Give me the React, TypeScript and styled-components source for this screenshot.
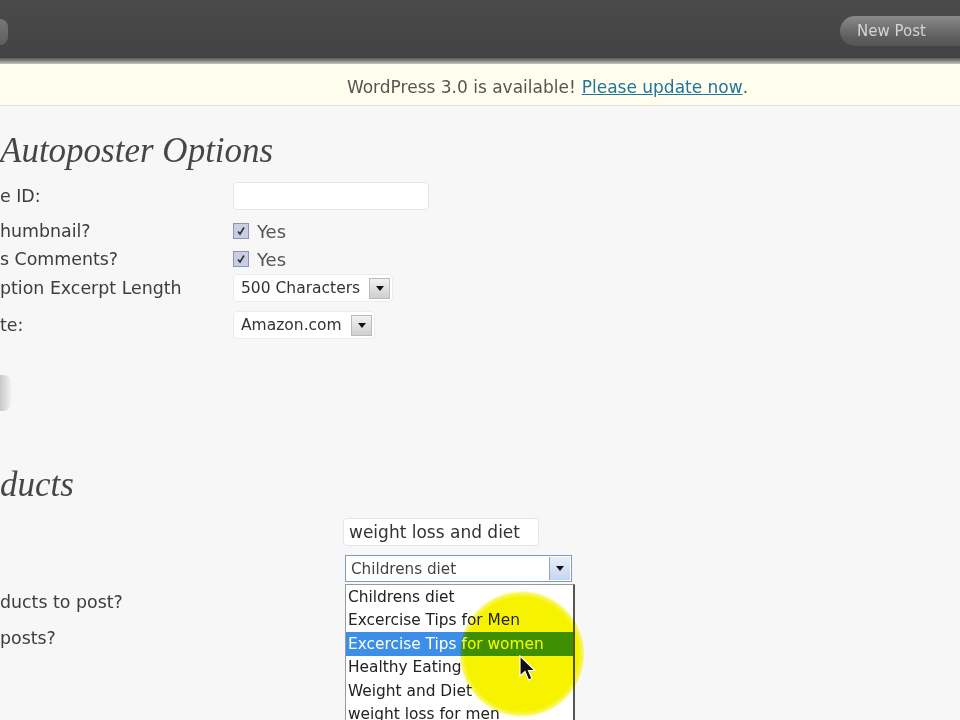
import React from "react";
import styled, { createGlobalStyle } from "styled-components";

const GlobalStyle = createGlobalStyle`
  html, body {
    margin: 0;
    padding: 0;
    width: 960px;
    height: 720px;
    overflow: hidden;
    background: #f7f7f7;
    font-family: "DejaVu Sans", Verdana, sans-serif;
  }
`;

const Page = styled.div`
  width: 960px;
  height: 720px;
  overflow: hidden;
  position: relative;
  display: flex;
  flex-direction: column;
`;

const Header = styled.div`
  height: 58px;
  background: linear-gradient(#4a4a4a, #434343);
  display: flex;
  align-items: center;
  justify-content: space-between;
  flex-shrink: 0;
`;

const HeaderEdge = styled.div`
  height: 6px;
  background: linear-gradient(#5a5a5a, #8a8a88 50%, #c8c8c0);
  flex-shrink: 0;
`;

const EdgeButton = styled.div`
  width: 8px;
  height: 26px;
  margin-top: 6px;
  border-radius: 0 8px 8px 0;
  background: linear-gradient(#777, #5e5e5e);
`;

const NewPost = styled.div`
  width: 122px;
  height: 30px;
  margin-top: 4px;
  margin-right: -2px;
  border-radius: 15px 0 0 15px;
  background: linear-gradient(#8a8a8a, #5f5f5f 70%, #555);
  color: #d4d4d4;
  font-size: 15px;
  display: flex;
  align-items: center;
  padding-left: 17px;
  box-sizing: border-box;
`;

const Notice = styled.div`
  height: 42px;
  background: #fffeee;
  border-bottom: 1px solid #e2e2d8;
  display: flex;
  align-items: center;
  justify-content: center;
  padding: 4px 0 0 135px;
  box-sizing: border-box;
  font-size: 17px;
  color: #555;
  flex-shrink: 0;
`;

const Link = styled.a`
  color: #21759b;
  text-decoration: underline;
  margin-left: 6px;
`;

const Content = styled.div`
  display: flex;
  flex-direction: column;
`;

const Heading = styled.h2<{ $top: number }>`
  margin: ${(p) => p.$top}px 0 0 0;
  height: 44px;
  line-height: 44px;
  font-family: "Liberation Serif", Georgia, serif;
  font-style: italic;
  font-weight: normal;
  font-size: 35px;
  color: #464646;
`;

const FormGrid = styled.div<{ $label: number; $top: number }>`
  display: grid;
  grid-template-columns: ${(p) => p.$label}px 1fr;
  margin-top: ${(p) => p.$top}px;
`;

const Label = styled.div<{ $h: number }>`
  height: ${(p) => p.$h}px;
  display: flex;
  align-items: center;
  font-size: 17.4px;
  color: #3d3d3d;
  white-space: nowrap;
`;

const Field = styled.div<{ $h: number }>`
  height: ${(p) => p.$h}px;
  display: flex;
  align-items: center;
  gap: 8px;
  position: relative;
  font-size: 18px;
  color: #555;
`;

const TextBox = styled.div<{ $w: number }>`
  width: ${(p) => p.$w}px;
  height: 28px;
  box-sizing: border-box;
  background: #fff;
  border: 1px solid #e6e6e6;
  border-radius: 4px;
  display: flex;
  align-items: center;
  padding-left: 5px;
  font-size: 17px;
  color: #333;
  white-space: nowrap;
`;

const Check = styled.div`
  width: 16px;
  height: 16px;
  box-sizing: border-box;
  background: #c9cee2;
  border: 1px solid #8d95b3;
  display: flex;
  align-items: center;
  justify-content: center;
`;

const SelectBox = styled.div<{ $w: number }>`
  width: ${(p) => p.$w}px;
  height: 28px;
  box-sizing: border-box;
  background: #fff;
  border: 1px solid #ececec;
  border-radius: 4px;
  display: flex;
  align-items: center;
  justify-content: space-between;
  padding: 0 2px 0 7px;
  font-size: 15.5px;
  color: #333;
  white-space: nowrap;
`;

const ArrowButton = styled.div`
  width: 21px;
  height: 21px;
  box-sizing: border-box;
  border: 1px solid #bbb;
  background: linear-gradient(#f2f2f2, #cfcfcf);
  display: flex;
  align-items: center;
  justify-content: center;
`;

const FocusSelect = styled.div`
  width: 227px;
  height: 27px;
  box-sizing: border-box;
  margin-left: 2px;
  background: #fff;
  border: 1px solid #7f9db9;
  display: flex;
  align-items: center;
  justify-content: space-between;
  padding: 0 1px 0 5px;
  font-size: 15.2px;
  color: #444;
  white-space: nowrap;
`;

const BlueArrow = styled.div`
  width: 21px;
  height: 23px;
  box-sizing: border-box;
  border-left: 1px solid #8ea6c8;
  background: linear-gradient(#e6eefc, #c4d5f2);
  display: flex;
  align-items: center;
  justify-content: center;
`;

const DropList = styled.div`
  position: absolute;
  top: 31px;
  left: 2px;
  width: 230px;
  background: #fff;
  border: 1px solid #9a9a9a;
  border-right: 2px solid #555;
  box-sizing: border-box;
  z-index: 2;
`;

const Option = styled.div<{ $active?: boolean }>`
  height: 23.5px;
  display: flex;
  align-items: center;
  padding-left: 2px;
  font-size: 15.4px;
  color: ${(p) => (p.$active ? "#fff" : "#222")};
  background: ${(p) => (p.$active ? "#3d8ee8" : "transparent")};
  white-space: nowrap;
`;

const SaveStub = styled.div`
  width: 11px;
  height: 36px;
  margin-top: 30px;
  border-radius: 0 8px 8px 0;
  background: linear-gradient(90deg, #a8a8a8, #ececec);
  opacity: 0.6;
`;

const Highlight = styled.div`
  position: absolute;
  left: 460px;
  top: 591px;
  width: 124px;
  height: 126px;
  border-radius: 50%;
  background: radial-gradient(
    circle,
    #f6f200 64%,
    rgba(246, 242, 0, 0.6) 69%,
    rgba(246, 242, 0, 0) 72%
  );
  mix-blend-mode: darken;
  z-index: 3;
  pointer-events: none;
`;

const Cursor = styled.svg`
  position: absolute;
  left: 519px;
  top: 655px;
  z-index: 4;
`;

const DownArrow = () => (
  <svg width="8" height="5" viewBox="0 0 8 5">
    <path d="M0 0 H8 L4 5 Z" fill="#111" />
  </svg>
);

const Tick = () => (
  <svg width="10" height="10" viewBox="0 0 10 10">
    <path d="M2 5.5 L4 8 L8 1.5" stroke="#333" strokeWidth="1.6" fill="none" />
  </svg>
);

const options = [
  "Childrens diet",
  "Excercise Tips for Men",
  "Excercise Tips for women",
  "Healthy Eating",
  "Weight and Diet",
  "weight loss for men",
];

export default function App() {
  return (
    <Page>
      <GlobalStyle />
      <Header>
        <EdgeButton />
        <NewPost>New Post</NewPost>
      </Header>
      <HeaderEdge />
      <Notice>
        WordPress 3.0 is available!
        <Link>Please update now</Link>.
      </Notice>
      <Content>
        <Heading $top={23}>Autoposter Options</Heading>
        <FormGrid $label={233} $top={4}>
          <Label $h={38}>e ID:</Label>
          <Field $h={38}>
            <TextBox $w={196} />
          </Field>
          <Label $h={32}>humbnail?</Label>
          <Field $h={32}>
            <Check>
              <Tick />
            </Check>
            Yes
          </Field>
          <Label $h={24}>s Comments?</Label>
          <Field $h={24}>
            <Check>
              <Tick />
            </Check>
            Yes
          </Field>
          <Label $h={34}>ption Excerpt Length</Label>
          <Field $h={34}>
            <SelectBox $w={160}>
              500 Characters
              <ArrowButton>
                <DownArrow />
              </ArrowButton>
            </SelectBox>
          </Field>
          <Label $h={40}>te:</Label>
          <Field $h={40}>
            <SelectBox $w={142}>
              Amazon.com
              <ArrowButton>
                <DownArrow />
              </ArrowButton>
            </SelectBox>
          </Field>
        </FormGrid>
        <SaveStub />
        <Heading $top={52}>ducts</Heading>
        <FormGrid $label={343} $top={4}>
          <Label $h={42} />
          <Field $h={42}>
            <TextBox $w={196}>weight loss and diet</TextBox>
          </Field>
          <Label $h={31} />
          <Field $h={31}>
            <FocusSelect>
              Childrens diet
              <BlueArrow>
                <DownArrow />
              </BlueArrow>
            </FocusSelect>
            <DropList>
              {options.map((o, i) => (
                <Option key={o} $active={i === 2}>
                  {o}
                </Option>
              ))}
            </DropList>
          </Field>
          <Label $h={36}>ducts to post?</Label>
          <Field $h={36} />
          <Label $h={36}>posts?</Label>
          <Field $h={36} />
        </FormGrid>
      </Content>
      <Highlight />
      <Cursor width="18" height="28" viewBox="0 0 18 28">
        <path
          d="M1 1 L1 21 L6 16.5 L9.5 25 L13 23.5 L9.5 15.5 L16 15.5 Z"
          fill="#111"
          stroke="#fff"
          strokeWidth="1.2"
        />
      </Cursor>
    </Page>
  );
}
